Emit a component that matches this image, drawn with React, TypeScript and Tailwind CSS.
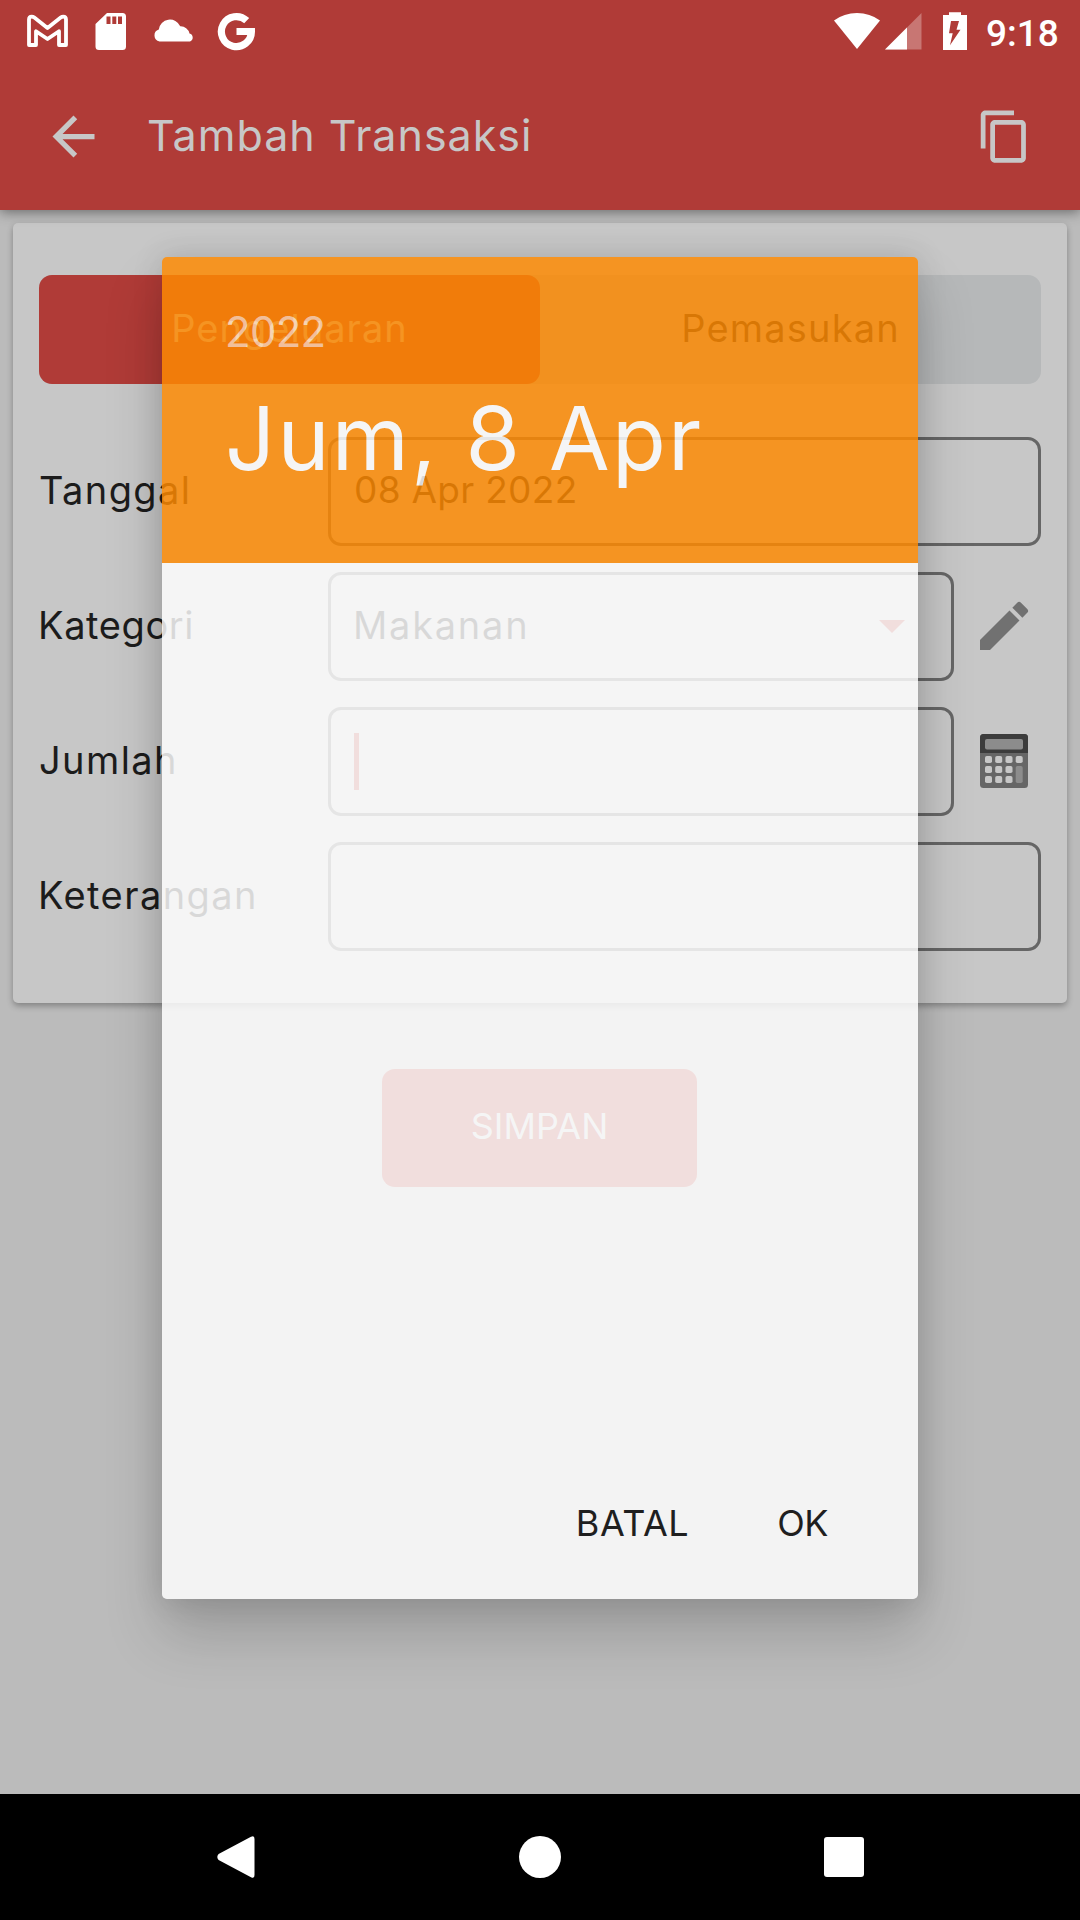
import type { ReactNode } from "react";
import { MdArrowBack, MdContentCopy, MdEdit } from "react-icons/md";

function StatusIcons() {
  return (
    <svg width="230" height="40" viewBox="26 12 230 40" fill="none">
      <path
        d="M32 45 H29 V19.5 Q29 16.6 31.8 16.6 Q33 16.6 34.3 17.6 L47.5 28 L60.7 17.6 Q62 16.6 63.2 16.6 Q66 16.6 66 19.5 V45 H59 V31.2 L47.5 39 L36 31.2 V45 Z"
        stroke="#fff"
        strokeWidth="3.8"
        strokeLinejoin="round"
      />
      <path
        fillRule="evenodd"
        fill="#fff"
        d="M107 13 H122.500 A3.500 3.500 0 0 1 126 16.500 V46.500 A3.500 3.500 0 0 1 122.500 50 H99 A3.500 3.500 0 0 1 95.500 46.500 V24 Z M106.500 16.500 V24 H110.500 V16.500 Z M112.300 16.500 V24 H116.300 V16.500 Z M118 16.500 V24 H122 V16.500 Z"
      />
      <path
        fill="#fff"
        d="M159.500 41.500 A6.200 6.200 0 0 1 158.800 29.500 A11.200 11.200 0 0 1 180.200 26.300 A9 9 0 0 1 189.500 33.500 A4.200 4.200 0 0 1 190 41.500 Z"
      />
      <path d="M246.700 20.700 A15 15 0 1 0 251.400 31.500 H236.500" stroke="#fff" strokeWidth="7.200" />
    </svg>
  );
}

function SystemIcons() {
  return (
    <svg width="134" height="40" viewBox="834 12 134 40" fill="#fff">
      <path d="M834 20.500 Q844 13 857 13 Q870 13 880 20.500 L857 49 Z" />
      <path d="M921.500 13 V49.500 H885 Z" fillOpacity="0.300" />
      <path d="M907 27.500 V49.500 H885 Z" />
      <path
        fillRule="evenodd"
        d="M949 12.300 H961 V15 H967 V50 H943 V15 H949 Z M951 21 L949 33.300 H952.700 L950 45.300 L960.500 29.700 H956.500 L959 21 Z"
      />
    </svg>
  );
}

function Calculator() {
  const cells = [985, 995.2, 1005.5, 1015.7];
  return (
    <svg width="48" height="54" viewBox="980 734 48 54">
      <rect x="980" y="734" width="48" height="54" rx="3.500" fill="#666666" />
      <path d="M980 753 V737.500 A3.500 3.500 0 0 1 983.500 734 H1024.500 A3.500 3.500 0 0 1 1028 737.500 V753 Z" fill="#3c3c3c" />
      <rect x="985" y="739" width="38" height="10.500" rx="2" fill="#8c8c8c" />
      {[756, 766, 776].map((y, r) =>
        cells.map((x, c) => (r > 0 && c === 3 ? null : <rect key={`${x}-${y}`} x={x} y={y} width="7" height="7" rx="1.800" fill="#c7c7c7" />)),
      )}
      <rect x="1015.700" y="766" width="7" height="17" rx="1.800" fill="#8c8c8c" />
    </svg>
  );
}

function Row({ label, children }: { label: ReactNode; children: ReactNode }) {
  return (
    <div className="flex h-[109px] items-center">
      <div className="w-[289px] shrink-0 pb-[3px] text-[38px] leading-[44px] whitespace-nowrap text-[#1c1c1c]">{label}</div>
      {children}
    </div>
  );
}

const field =
  "flex h-[109px] items-center rounded-[13px] border-[3px] border-[#666666] pb-[3px] leading-[44px] text-[#1c1c1c]";

export default function App() {
  return (
    <div className="relative flex h-[1920px] w-[1080px] flex-col overflow-hidden bg-[#bbbbbb] font-['Inter',sans-serif]">
      <header className="relative flex h-[210px] shrink-0 flex-col bg-[#b03b37] shadow-[0_2px_12px_rgba(0,0,0,0.45)]">
        <div className="flex h-[63px] items-start pt-3 pl-[26px]">
          <StatusIcons />
          <div className="ml-[578px]">
            <SystemIcons />
          </div>
          <div className="ml-[18px] pt-px font-['Roboto',sans-serif] text-[37px] leading-[41px] font-medium text-white">9:18</div>
        </div>
        <div className="flex h-[147px] items-center pl-[42px] text-[#c7c7c7]">
          <MdArrowBack size={63} />
          <h1 className="ml-[42px] flex-1 pb-[3px] text-[43px] leading-[50px] font-normal tracking-[1px]">Tambah Transaksi</h1>
          <MdContentCopy size={57} className="mr-[47px] mb-px" />
        </div>
      </header>

      <main className="flex flex-1 flex-col items-center">
        <section className="mt-[13px] flex h-[780px] w-[1054px] flex-col rounded-[5px] bg-[#c7c7c7] px-[26px] pt-[52px] shadow-[0_3px_6px_rgba(0,0,0,0.3)]">
          <div className="flex h-[109px] shrink-0 rounded-[13px] bg-[#b6b8b9] text-[38px] leading-[44px]">
            <div className="flex w-1/2 items-center justify-center rounded-[13px] bg-[#b03b37] pb-[3px] tracking-[1.030px] text-[#c7c7c7]">
              Pengeluaran
            </div>
            <div className="flex w-1/2 items-center justify-center pb-[3px] tracking-[1.190px] text-[#1c1c1c]">Pemasukan</div>
          </div>

          <div className="mt-[53px] flex flex-col gap-[26px]">
            <Row label={<span className="tracking-[1.370px]">Tanggal</span>}>
              <div className={`${field} flex-1 pl-[23px] text-[37px] tracking-[0.300px]`}>08 Apr 2022</div>
            </Row>
            <Row label={<span className="-ml-px tracking-[0.600px]">Kategori</span>}>
              <div className={`${field} w-[626px] justify-between pr-[46px] pl-[22px] text-[38px] tracking-[1.750px]`}>
                Makanan
                <svg width="26" height="13" viewBox="0 0 26 13" fill="#b03b37" className="mt-[3px]">
                  <path d="M0 0h26L13 13z" />
                </svg>
              </div>
              <MdEdit size={64} color="#717171" className="mb-[2px] ml-[18px]" />
            </Row>
            <Row label={<span className="tracking-[1.400px]">Jumlah</span>}>
              <div className={`${field} w-[626px] pl-[23px]`}>
                <div className="mt-[3px] h-[57px] w-[5px] bg-[#b03b37]" />
              </div>
              <div className="mb-[2px] ml-[26px]">
                <Calculator />
              </div>
            </Row>
            <Row label={<span className="-ml-px tracking-[1.440px]">Keterangan</span>}>
              <div className={`${field} flex-1`} />
            </Row>
          </div>
        </section>

        <button className="mt-[66px] mr-px h-[118px] w-[315px] rounded-[13px] bg-[#b03b37] pb-[4px] text-[36px] leading-[44px] text-[#c7c7c7]">
          SIMPAN
        </button>
      </main>

      <nav className="flex h-[126px] shrink-0 items-center bg-black pl-[217px]">
        <svg width="38" height="42" viewBox="0 0 38 42" fill="#fff">
          <path d="M37.500 3 V39 Q37.500 43.200 34 41.200 L1.600 24 Q-1 21 1.600 18 L34 0.800 Q37.500 -1.200 37.500 3 Z" />
        </svg>
        <div className="ml-[264px] size-[42px] rounded-full bg-white" />
        <div className="ml-[263px] size-10 rounded-[3px] bg-white" />
      </nav>

      <div className="absolute inset-x-0 top-0 h-[1794px] overflow-hidden">
        <div className="mx-auto mt-[257px] flex h-[1342px] w-[756px] flex-col overflow-hidden rounded-[5px] opacity-83 shadow-[0_34px_56px_rgba(0,0,0,0.21),0_0_30px_rgba(0,0,0,0.16)]">
          <div className="flex h-[306px] shrink-0 flex-col bg-[#ff8a01] pl-[63px]">
            <div className="mt-[50px] text-[42px] leading-[50px] tracking-[-0.700px] text-white/70">2022</div>
            <div className="mt-[29px] text-[88px] leading-[104px] tracking-[2.200px] whitespace-nowrap text-white">Jum, 8 Apr</div>
          </div>
          <div className="flex flex-1 items-end justify-end bg-white pr-[90px] pb-[54px] text-[36px] leading-[44px] text-black">
            <span className="tracking-[0.540px]">BATAL</span>
            <span className="ml-[88px] tracking-[-0.500px]">OK</span>
          </div>
        </div>
      </div>
    </div>
  );
}
